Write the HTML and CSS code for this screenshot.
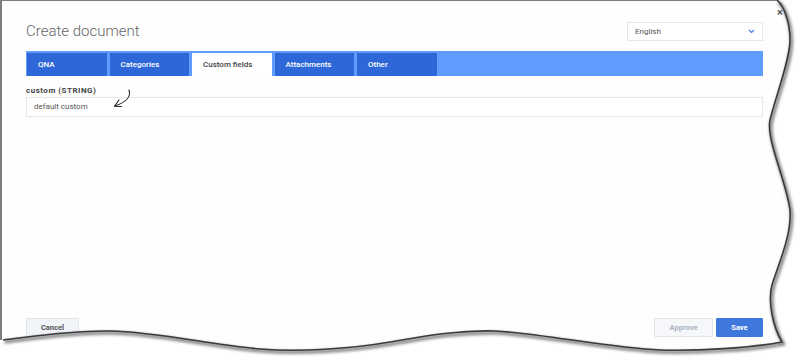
FILE: index.html
```html
<!DOCTYPE html>
<html lang="en">
<head>
<meta charset="utf-8">
<title>Create document</title>
<link rel="stylesheet" href="styles.css">
</head>
<body>
<div class="dialog">
  <div class="header">
    <h1 class="title">Create document</h1>
    <div class="select">
      <span>English</span>
      <svg class="chev" width="7" height="5" viewBox="0 0 7 5"><polyline points="1,1 3.5,3.5 6,1" fill="none" stroke="#4a7fe0" stroke-width="1.2"/></svg>
    </div>
  </div>
  <div class="tabs">
    <div class="tab">QNA</div>
    <div class="tab">Categories</div>
    <div class="tab active">Custom fields</div>
    <div class="tab">Attachments</div>
    <div class="tab">Other</div>
  </div>
  <div class="field">
    <label class="label">custom (STRING)</label>
    <div class="input">default custom</div>
  </div>
  <div class="spacer"></div>
  <div class="footer">
    <button class="btn">Cancel</button>
    <div class="right">
      <button class="btn disabled">Approve</button>
      <button class="btn primary">Save</button>
    </div>
  </div>

  <svg class="arrow" width="40" height="30" viewBox="100 85 40 30">
    <path d="M129,90 C131,96 127,102 115,106" fill="none" stroke="#222" stroke-width="1.1" stroke-linecap="round"/>
    <path d="M119,100 L114.5,106.2 L121.5,106.5" fill="none" stroke="#222" stroke-width="1.1" stroke-linecap="round" stroke-linejoin="round"/>
  </svg>

  <svg class="torn" width="800" height="361" viewBox="0 0 800 361">
    <defs>
      <filter id="blur" x="-10%" y="-10%" width="120%" height="120%"><feGaussianBlur stdDeviation="1.4"/></filter>
    </defs>
    <path d="M777,-2 L777,0 C784,6 790,22 790,40 C790,60 776,95 770,120 C766,140 786,180 790,210 C792,235 778,265 772,285 C768,300 772,325 782,342 C750,348 700,351 660,350 C610,348 540,333 495,331 C455,330 420,337 390,342 C350,349 300,352 260,349 C210,345 160,332 110,331 C70,330 30,337 3,340 L0,340 L0,361 L800,361 L800,-2 Z" fill="#fff"/>
    <path d="M777,0 C784,6 790,22 790,40 C790,60 776,95 770,120 C766,140 786,180 790,210 C792,235 778,265 772,285 C768,300 772,325 782,342 C750,348 700,351 660,350 C610,348 540,333 495,331 C455,330 420,337 390,342 C350,349 300,352 260,349 C210,345 160,332 110,331 C70,330 30,337 3,340" fill="none" stroke="#777" stroke-width="3" transform="translate(1.5,2)" filter="url(#blur)"/>
    <path d="M777,0 C784,6 790,22 790,40 C790,60 776,95 770,120 C766,140 786,180 790,210 C792,235 778,265 772,285 C768,300 772,325 782,342 C750,348 700,351 660,350 C610,348 540,333 495,331 C455,330 420,337 390,342 C350,349 300,352 260,349 C210,345 160,332 110,331 C70,330 30,337 3,340" fill="none" stroke="#3a3a3a" stroke-width="1.6"/>
  </svg>
  <span class="close">×</span>
</div>
</body>
</html>
```
FILE: styles.css
```css
* { box-sizing: border-box; }
html, body { margin: 0; padding: 0; background: #fff; }
body {
  width: 800px;
  height: 361px;
  overflow: hidden;
  font-family: Roboto, "Liberation Sans", sans-serif;
}
.dialog {
  position: relative;
  height: 361px;
  border-left: 2px solid #7c7c7c;
  border-top: 1px solid #7c7c7c;
  padding: 21px 37px 24px 24px;
  display: flex;
  flex-direction: column;
  background: #fefefe;
}
.header {
  display: flex;
  justify-content: space-between;
  align-items: center;
  height: 19px;
}
.title {
  margin: 0;
  font-size: 15px;
  line-height: 19px;
  font-weight: 300;
  color: #666;
}
.select {
  width: 136px;
  height: 19px;
  border: 1px solid #e2e7ec;
  display: flex;
  align-items: center;
  justify-content: space-between;
  padding: 0 7px 0 7px;
  font-size: 8px;
  color: #555;
  background: #fff;
}
.chev { display: block; }
.tabs {
  margin-top: 10px;
  height: 25px;
  background: #5e9cfd;
  display: flex;
  gap: 3px;
  padding: 2px 1px 0 1px;
}
.tab {
  width: 79.5px;
  height: 23px;
  background: #2e67d8;
  color: #fff;
  font-size: 8px;
  font-weight: 500;
  line-height: 23px;
  padding-left: 11px;
}
.tab.active {
  background: #fff;
  color: #444;
}
.field { margin-top: 9px; }
.label {
  display: block;
  font-size: 8px;
  font-weight: 700;
  letter-spacing: 0.5px;
  color: #444;
  line-height: 11px;
  height: 11px;
}
.input {
  margin-top: 1px;
  height: 20px;
  border: 1px solid #e3e7ec;
  font-size: 8px;
  color: #555;
  line-height: 18px;
  padding-left: 7px;
  background: #fff;
}
.spacer { flex: 1; }
.footer {
  display: flex;
  justify-content: space-between;
  align-items: flex-end;
}
.right { display: flex; gap: 3px; }
.btn {
  height: 19px;
  font-family: Roboto, "Liberation Sans", sans-serif;
  font-size: 7.5px;
  font-weight: 700;
  border: 1px solid #e1e6eb;
  background: #f1f4f8;
  color: #555;
  border-radius: 1px;
  padding: 0;
  width: 53px;
}
.btn.disabled {
  width: 59px;
  color: #a9b3c1;
  background: #f5f7fa;
}
.btn.primary {
  width: 47px;
  background: #3f78dc;
  border-color: #3f78dc;
  color: #fff;
}
.arrow {
  position: absolute;
  left: 98px;
  top: 84px;
}
.torn {
  position: absolute;
  left: -2px;
  top: -1px;
}
.close {
  position: absolute;
  left: 775px;
  top: 6px;
  font-size: 11px;
  font-weight: 700;
  color: #555;
  line-height: 12px;
}
```
